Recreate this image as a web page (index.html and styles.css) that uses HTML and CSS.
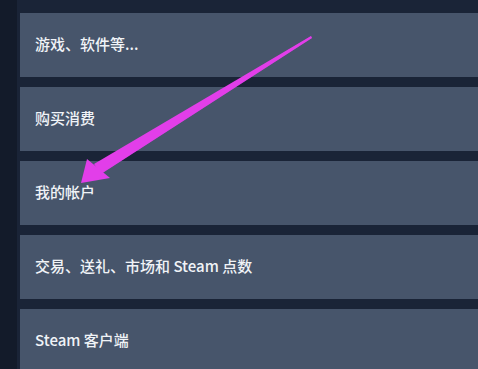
FILE: index.html
```html
<!DOCTYPE html>
<html lang="zh-CN">
<head>
    <meta charset="utf-8">
    <title>Steam 客服</title>
    <link rel="stylesheet" href="styles.css">
</head>
<body>
    <div class="page">
        <ul class="topics">
            <li class="topic">游戏、软件等...</li>
            <li class="topic">购买消费</li>
            <li class="topic">我的帐户</li>
            <li class="topic">交易、送礼、市场和 Steam 点数</li>
            <li class="topic">Steam 客户端</li>
        </ul>

        <!-- pointer drawn over the list -->
        <svg class="arrow" width="478" height="369" viewBox="0 0 478 369">
            <polygon class="glow" points="311,36 312,38 99,175 95,168" />
            <polygon class="shaft" points="311,36 312,38 101,174 94,164" />
            <polygon class="shaft" points="81,183 87,159 110,178" />
        </svg>
    </div>
</body>
</html>
```

FILE: styles.css
```css
html, body {
    margin: 0;
    height: 100%;
}
body {
    background-color: #1a2437;
    font-family: "Noto Sans CJK SC", "Noto Sans", sans-serif;
    overflow: hidden;
}
.page {
    position: relative;
    height: 100%;
    border-left: 17px solid #131b2a;
    box-sizing: border-box;
}
.topics {
    list-style: none;
    margin: 0;
    padding: 13px 0 0 3px;
    display: flex;
    flex-direction: column;
    gap: 10px;
}
.topic {
    height: 64px;
    box-sizing: border-box;
    display: flex;
    align-items: center;
    padding: 0 0 3px 15px;
    background-color: #47556b;
    color: #f0f3f7;
    font-size: 15px;
    font-weight: 500;
}
.arrow {
    position: absolute;
    top: 0;
    left: -17px;
    pointer-events: none;
}
.shaft {
    fill: #e23ee9;
}
.glow {
    fill: #b43bd0;
    opacity: 0.5;
}
```
